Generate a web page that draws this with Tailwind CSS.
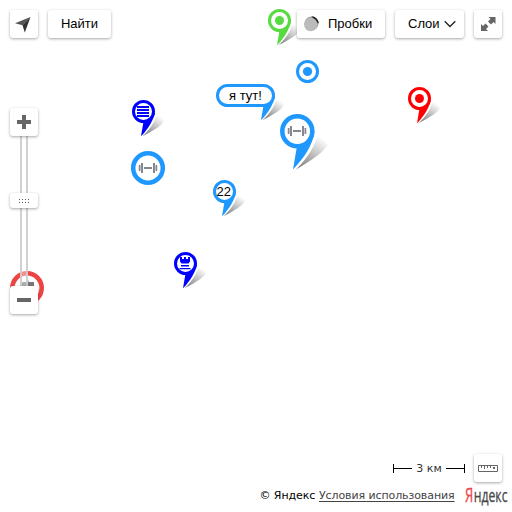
<!DOCTYPE html>
<html lang="ru">
<head>
<meta charset="utf-8">
<title>Карта</title>
<script src="https://cdn.jsdelivr.net/npm/@tailwindcss/browser@4"></script>
</head>
<body class="bg-white font-['Liberation_Sans',Arial,sans-serif] text-[13px] leading-[28px] text-black">
<svg class="absolute size-0" aria-hidden="true">
  <defs>
    <linearGradient id="shade" x1="0.100" y1="1" x2=".8" y2="0"><stop offset="0" stop-color="#777"/><stop offset=".45" stop-color="#b4b4b4"/><stop offset="1" stop-color="#fff"/></linearGradient>
    <symbol id="tail" viewBox="0 0 36 37">
      <path d="M10 36.5C16 31 21.500 25 24 16Q29 15.500 32 21Q29 27 10 36.500Z" fill="url(#shade)"/>
      <path d="M23 12C22 19 16.500 29 9 36.200L11.500 21.500Z" fill="#fff" stroke="#fff" stroke-width="2.500"/>
      <path d="M23 12C22 19 16.500 29 9 36.200L11.500 21.500Z" fill="currentColor"/>
    </symbol>
    <symbol id="pin" viewBox="0 0 36 37">
      <use href="#tail" width="36" height="37"/>
      <circle cx="11.500" cy="11.500" r="10" fill="#fff" stroke="currentColor" stroke-width="3"/>
    </symbol>
    <symbol id="barbell" viewBox="0 0 19 12"><path d="M0 3h2v6H0zM2.500 1h2v10h-2zM5.500 5h8v2h-8zM14.500 1h2v10h-2zM17 3h2v6h-2z" fill="#85888e"/></symbol>
  </defs>
</svg>
<main class="relative h-[512px] w-[512px] overflow-hidden">
  <!-- Placemarks -->
  <svg class="absolute top-0 left-0" width="512" height="512">
    <g color="#56db40"><use href="#pin" x="268" y="9" width="36" height="37"/><circle cx="279.500" cy="20.500" r="4.500" fill="currentColor"/></g>
    <g color="#f00"><use href="#pin" x="408" y="87" width="36" height="37"/><circle cx="419.500" cy="98.500" r="4.500" fill="currentColor"/></g>
    <g color="#1e98ff">
      <circle cx="307.500" cy="71.500" r="10" fill="#fff" stroke="currentColor" stroke-width="3"/><circle cx="307.500" cy="71.500" r="4.600" fill="currentColor"/>
      <use href="#tail" x="252" y="84" width="36" height="37"/>
      <rect x="217.500" y="85.500" width="56" height="20" rx="10" fill="#fff" stroke="currentColor" stroke-width="3"/>
      <text x="229" y="100" font-size="13" fill="#000">я тут!</text>
      <path d="M295 170C305 161 313 150 317 137Q324 136 327.500 145Q323 154 295 170Z" fill="url(#shade)"/>
      <path d="M314.500 131C313 145 304 158 293 169.500L297 146Z" fill="#fff" stroke="#fff" stroke-width="4"/>
      <path d="M314.500 131C313 145 304 158 293 169.500L297 146Z" fill="currentColor"/>
      <circle cx="297.300" cy="131.300" r="15" fill="#fff" stroke="currentColor" stroke-width="4.500"/>
      <use href="#barbell" x="287.500" y="125" width="19" height="12"/>
      <circle cx="148" cy="168" r="14.800" fill="#fff" stroke="currentColor" stroke-width="4.500"/>
      <use href="#barbell" x="138.500" y="162" width="19" height="12"/>
      <use href="#pin" x="213" y="180" width="36" height="37"/>
      <text x="216.500" y="196" font-size="13" fill="#000">22</text>
    </g>
    <g color="#00f">
      <use href="#pin" x="132" y="100" width="36" height="37"/>
      <path d="M137 106h12v2h-12zM137 109h12v2h-12zM137 112h12v2h-12zM137 115h12v2h-12z" fill="currentColor"/>
      <use href="#pin" x="174" y="252" width="36" height="37"/>
      <path d="M180 257h2v2h2v-2h2v2h2v-2h2v4.500l-1.500 2h-7l-1.500-2zM181 265h8v1.500h-8zM179.500 268h11v1.200h-11z" fill="currentColor"/>
    </g>
    <circle cx="27" cy="288" r="14.700" fill="#fff" stroke="#ed4543" stroke-width="4.600"/>
    <path d="M20.500 282.500h2V282h4v-1.500h2V282h5.500v5H20.500z" fill="#777"/>
  </svg>

  <!-- Toolbar -->
  <header class="absolute inset-x-0 top-0 flex gap-[10px] p-[10px]">
    <button class="size-[28px] rounded-[3px] bg-white shadow-[0_1px_3px_rgba(0,0,0,.35)]" aria-label="Моё местоположение">
      <svg width="28" height="28"><path d="M20.500 7L5 13.200L12.500 15.200Z" fill="#555"/><path d="M20.500 7L12.500 15.200L14.800 22.500Z" fill="#333"/></svg>
    </button>
    <button class="h-[28px] w-[63px] rounded-[3px] bg-white leading-[28px] shadow-[0_1px_3px_rgba(0,0,0,.35)]">Найти</button>
    <button class="ml-auto flex h-[28px] w-[88px] items-center gap-[8px] rounded-[3px] bg-white pl-[6px] leading-[28px] shadow-[0_1px_3px_rgba(0,0,0,.35)]">
      <svg width="17" height="16"><circle cx="8.600" cy="7.400" r="6.900" fill="#999"/><path d="M8.500 .3a7.200 7.200 0 0 1 7.200 7.200L13 6z" fill="#222"/><circle cx="7.700" cy="8.500" r="6.700" fill="#bbb"/></svg><span>Пробки</span>
    </button>
    <button class="flex h-[28px] w-[69px] items-center gap-[5px] rounded-[3px] bg-white pl-[13px] leading-[28px] shadow-[0_1px_3px_rgba(0,0,0,.35)]">Слои
      <svg class="-ml-px" width="12" height="8" fill="none" stroke="#222" stroke-width="1.300"><path d="M.7 1.200L6 6.500L11.300 1.200"/></svg>
    </button>
    <button class="size-[28px] rounded-[3px] bg-white shadow-[0_1px_3px_rgba(0,0,0,.35)]" aria-label="На весь экран">
      <svg width="28" height="28" fill="#666"><path d="M14.500 7H21.500v7l-2-2-2.500 2.500-3-3L16.500 9zM7 21v-7l2 2 2.500-2.500 3 3L12 19l2 2z"/></svg>
    </button>
  </header>

  <!-- Zoom control -->
  <section class="absolute top-[108px] left-[10px] flex w-[28px] flex-col items-center">
    <button class="z-10 size-[28px] rounded-[3px] bg-white shadow-[0_1px_3px_rgba(0,0,0,.35)]" aria-label="Приблизить"><svg width="28" height="28"><path d="M12 7h4v5h5v4h-5v5h-4v-5H7v-4h5z" fill="#666"/></svg></button>
    <div class="flex h-[150px] w-[8px] flex-col items-center border-x-2 border-[#ccc]/90 bg-white/40">
      <div class="mt-[57px] grid h-[15px] w-[28px] shrink-0 place-items-center rounded-[3px] bg-white shadow-[0_1px_3px_rgba(0,0,0,.35)]">
        <svg width="10" height="4" fill="#555"><path d="M0 0h1v1H0zM3 0h1v1H3zM6 0h1v1H6zM9 0h1v1H9zM0 3h1v1H0zM3 3h1v1H3zM6 3h1v1H6zM9 3h1v1H9z"/></svg>
      </div>
    </div>
    <button class="z-10 size-[28px] rounded-[3px] bg-white shadow-[0_1px_3px_rgba(0,0,0,.35)]" aria-label="Отдалить"><svg width="28" height="28"><path d="M7 12h14v4H7z" fill="#666"/></svg></button>
  </section>

  <!-- Scale, ruler and copyright -->
  <footer class="absolute right-0 bottom-0 flex h-[58px] w-[262px] flex-col font-['DejaVu_Sans',Verdana,sans-serif] text-[11px]">
    <div class="flex h-[28px] items-center justify-end pr-[10px]">
      <div class="mr-[9px] flex w-[72px] items-center justify-between text-[#333]">
        <span class="flex h-[9px] w-[19px] items-center border-l border-black"><i class="h-px w-full bg-black"></i></span>
        <span class="pt-[2px] leading-[26px] whitespace-nowrap">3 км</span>
        <span class="flex h-[9px] w-[19px] items-center border-r border-black"><i class="h-px w-full bg-black"></i></span>
      </div>
      <button class="size-[28px] rounded-[3px] bg-white shadow-[0_1px_3px_rgba(0,0,0,.35)]" aria-label="Линейка"><svg width="28" height="28" fill="none" stroke="#666"><path d="M4.500 11.500h19v6h-19zM7.500 11v3M10.500 11v4M13.500 11v3M16.500 11v3"/><path d="M19 13h2v2h-2z" fill="#666" stroke="none"/></svg></button>
    </div>
    <div class="flex items-start pl-[9.5px] leading-[28px] whitespace-nowrap">
      <span class="w-[59.500px] tracking-[-0.07px]">© Яндекс</span><a class="w-[136px] tracking-[-0.1px] text-[#444] underline underline-offset-2">Условия использования</a>
      <svg class="mt-[1px] ml-[9.500px] shrink-0 overflow-visible" width="46" height="28" font-family="Open Sans, sans-serif">
        <text x="0" y="18.500" font-size="20" fill="#f0444b" textLength="8.300" lengthAdjust="spacingAndGlyphs" stroke="#f0444b" stroke-width=".3">Я</text>
        <text x="8.700" y="18.500" font-size="17.500" fill="#484848" textLength="33.800" lengthAdjust="spacingAndGlyphs" stroke="#484848" stroke-width=".3">ндекс</text>
      </svg>
    </div>
  </footer>
</main>
</body>
</html>
